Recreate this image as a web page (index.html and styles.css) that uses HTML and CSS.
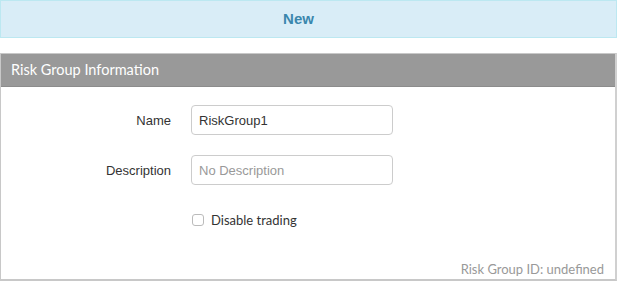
FILE: index.html
```html
<!DOCTYPE html>
<html>
<head>
<meta charset="utf-8">
<link rel="stylesheet" href="styles.css">
</head>
<body>
<div class="banner">New</div>
<div class="panel">
  <div class="panel-head">Risk Group Information</div>
  <div class="panel-body">
    <div class="form">
      <label class="lbl">Name</label>
      <input class="field" type="text" value="RiskGroup1">
      <label class="lbl">Description</label>
      <input class="field" type="text" placeholder="No Description">
      <span></span>
      <label class="check"><span class="box"></span>Disable trading</label>
    </div>
    <div class="foot">Risk Group ID: undefined</div>
  </div>
</div>
</body>
</html>
```
FILE: styles.css
```css
html, body { margin: 0; padding: 0; background: #fff; }
body { font-family: Lato, "Liberation Sans", sans-serif; width: 617px; height: 281px; overflow: hidden; }
.banner {
  height: 36px; line-height: 36px;
  background: #d9edf7; border: 1px solid #bce8f1;
  color: #3a87ad; font-weight: 700; font-size: 15px;
  text-align: center; font-family: "Liberation Sans", sans-serif;
  padding-right: 20px;
}
.panel {
  margin-top: 15px;
  border: 1px solid #c8c8c8;
  border-right: 2px solid #d0d0d0;
  border-bottom: 2px solid #c8c8c8;
  height: 225px;
  display: flex; flex-direction: column;
}
.panel-head {
  background: #999; color: #fff;
  height: 32px; line-height: 32px;
  padding-left: 10px; font-size: 14.5px;
  border-bottom: 1px solid #8c8c8c;
}
.panel-body { padding-top: 18px; display: flex; flex-direction: column; flex: 1; }
.form {
  display: grid; grid-template-columns: 170px 202px;
  column-gap: 20px; row-gap: 20px; align-items: center;
}
.lbl { text-align: right; font-size: 13px; color: #333; font-family: "Liberation Sans", sans-serif; }
.field {
  box-sizing: border-box; height: 30px; width: 202px; margin: 0;
  border: 1px solid #ccc; border-radius: 4px;
  padding: 0 7px; font-size: 13px; color: #333;
  font-family: "Liberation Sans", sans-serif; outline: none;
}
.field::placeholder { color: #999; }
.check { display: flex; align-items: center; font-size: 13px; color: #333; margin-top: 7px; }
.box {
  width: 10px; height: 10px; border: 1px solid #bbb; border-radius: 3px;
  margin-right: 7px; margin-left: 1px; background: #fff;
}
.foot { text-align: right; font-size: 13px; color: #999; padding-right: 11px; margin-top: auto; padding-bottom: 2px; }
```
